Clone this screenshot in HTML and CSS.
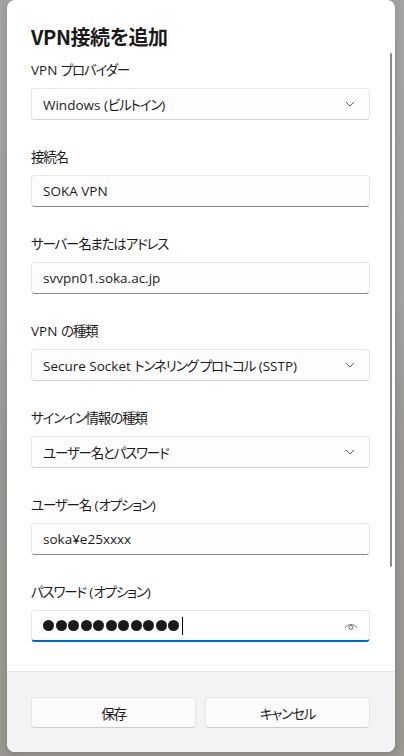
FILE: index.html
```html
<!DOCTYPE html>
<html lang="ja">
<head>
<meta charset="utf-8">
<title>VPN接続を追加</title>
<link rel="stylesheet" href="styles.css">
</head>
<body>
<div class="backdrop">
  <div class="dialog">
    <div class="content">
      <div class="scrollbar"></div>
      <h1 class="title">VPN接続を追加</h1>

      <div class="field">
        <div class="label">VPN <span class="ja">プロバイダー</span></div>
        <div class="box select"><span>Windows (<span class="ja">ビルトイン</span>)</span>
          <svg class="chev" width="10" height="6" viewBox="0 0 10 6"><path d="M1 1 L5 5 L9 1" fill="none" stroke="#5f5f5f" stroke-width="1"/></svg>
        </div>
      </div>

      <div class="field">
        <div class="label"><span class="ja">接続名</span></div>
        <div class="box text"><span>SOKA VPN</span></div>
      </div>

      <div class="field">
        <div class="label"><span class="ja">サーバー名またはアドレス</span></div>
        <div class="box text"><span>svvpn01.soka.ac.jp</span></div>
      </div>

      <div class="field">
        <div class="label">VPN <span class="ja">の種類</span></div>
        <div class="box select"><span>Secure Socket <span class="ja">トンネリング プロトコル</span> (SSTP)</span>
          <svg class="chev" width="10" height="6" viewBox="0 0 10 6"><path d="M1 1 L5 5 L9 1" fill="none" stroke="#5f5f5f" stroke-width="1"/></svg>
        </div>
      </div>

      <div class="field">
        <div class="label"><span class="ja">サインイン情報の種類</span></div>
        <div class="box select"><span class="ja">ユーザー名とパスワード</span>
          <svg class="chev" width="10" height="6" viewBox="0 0 10 6"><path d="M1 1 L5 5 L9 1" fill="none" stroke="#5f5f5f" stroke-width="1"/></svg>
        </div>
      </div>

      <div class="field">
        <div class="label"><span class="ja">ユーザー名</span> (<span class="ja">オプション</span>)</div>
        <div class="box text"><span>soka¥e25xxxx</span></div>
      </div>

      <div class="field">
        <div class="label"><span class="ja">パスワード</span> (<span class="ja">オプション</span>)</div>
        <div class="box text focus">
          <span class="dots"><i></i><i></i><i></i><i></i><i></i><i></i><i></i><i></i><i></i><i></i><i></i><b class="caret"></b></span>
          <svg class="eye" width="14" height="10" viewBox="0 0 14 10"><path d="M1 7 C3 2.5 11 2.5 13 7" fill="none" stroke="#707070" stroke-width="1"/><circle cx="7" cy="6.5" r="2" fill="none" stroke="#707070" stroke-width="1"/></svg>
        </div>
      </div>
    </div>
    <div class="footer">
      <button class="btn"><span class="ja">保存</span></button>
      <button class="btn"><span class="ja">キャンセル</span></button>
    </div>
  </div>
</div>
</body>
</html>
```
FILE: styles.css
```css
* { box-sizing: border-box; }
html, body { margin: 0; padding: 0; }
body {
  width: 404px;
  height: 756px;
  overflow: hidden;
  background: linear-gradient(180deg, #a4a5a6 0%, #a3a3a3 40%, #9d9a95 60%, #9c9993 100%);
  font-family: "Open Sans", "Noto Sans CJK JP", sans-serif;
  font-feature-settings: "palt";
  color: #1b1b1b;
}
.ja {
  letter-spacing: -1.2px;
}
.backdrop {
  padding-left: 7px;
}
.dialog {
  width: 388px;
  height: 752px;
  background: #ffffff;
  overflow: hidden;
  display: flex;
  flex-direction: column;
  box-shadow: 0 2px 10px rgba(0,0,0,0.18);
  border-radius: 8px;
}
.content {
  position: relative;
  height: 671px;
  padding: 23px 25px 0 24px;
  overflow: hidden;
}
.scrollbar {
  position: absolute;
  left: 383px;
  top: 53px;
  width: 2px;
  height: 514px;
  border-radius: 1px;
  background: #8a8a8a;
}
.title {
  margin: 0 0 9px 0;
  font-family: "Noto Sans CJK JP", sans-serif;
  font-size: 20px;
  line-height: 28px;
  font-weight: 600;
  letter-spacing: -0.4px;
  color: #1a1a1a;
}
.field {
  margin-bottom: 27px;
}
.label {
  font-size: 13.5px;
  line-height: 20px;
  margin-bottom: 8px;
  color: #1b1b1b;
}
.box {
  height: 32px;
  border: 1px solid #e6e6e6;
  border-radius: 4px;
  background: #fdfdfd;
  display: flex;
  align-items: center;
  justify-content: space-between;
  padding: 0 14px 0 11px;
  font-size: 13.5px;
  color: #1b1b1b;
}
.box.select {
  border-bottom-color: #d3d3d3;
}
.box.text {
  border-bottom: 1px solid #8a8a8a;
}
.box.focus {
  border-bottom: 2px solid #0067c0;
  background: #ffffff;
  padding-right: 11px;
}
.chev { display: block; }
.dots {
  display: flex;
  align-items: center;
  gap: 1.5px;
}
.dots i {
  display: block;
  width: 11px;
  height: 11px;
  border-radius: 50%;
  background: #1a1a1a;
}
.dots .caret {
  display: block;
  width: 1px;
  height: 18px;
  background: #000;
  margin-left: 1px;
}
.eye { display: block; margin-top: 1px; }
.footer {
  flex: 1;
  background: #f3f3f3;
  border-top: 1px solid #e5e5e5;
  padding: 25px 25px 0 24px;
  display: grid;
  grid-template-columns: 1fr 1fr;
  gap: 9px;
  align-content: start;
}
.btn {
  height: 31px;
  border: 1px solid #e5e5e5;
  border-bottom-color: #cccccc;
  border-radius: 4px;
  background: #fbfbfb;
  font-family: "Open Sans", "Noto Sans CJK JP", sans-serif;
  font-feature-settings: "palt";
  font-size: 13.5px;
  color: #1b1b1b;
  padding: 0;
}
```
